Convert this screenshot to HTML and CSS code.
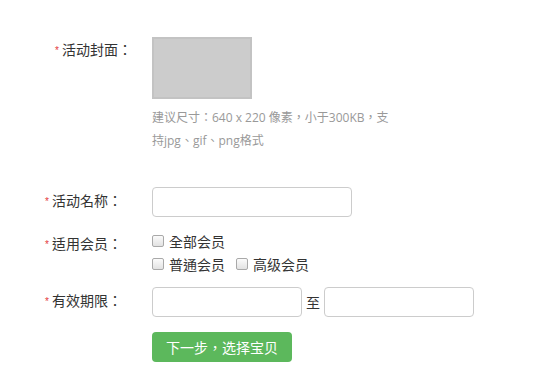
FILE: index.html
```html
<!DOCTYPE html>
<html lang="zh-TW">
<head>
  <meta charset="UTF-8" />
  <title>创建活动</title>
  <link rel="stylesheet" href="styles.css">
</head>
<body>
  <form class="form">
    <div class="row row-cover">
      <label class="label label-cover"><span class="star">*</span>活动封面：</label>
      <div class="field">
        <div class="cover"></div>
        <p class="hint">建议尺寸：640 x 220 像素，小于300KB，支持jpg、gif、png格式</p>
      </div>
    </div>

    <div class="row row-name">
      <label class="label label-input"><span class="star">*</span>活动名称：</label>
      <div class="field">
        <input type="text" class="input input-name" />
      </div>
    </div>

    <div class="row row-member">
      <label class="label label-check"><span class="star">*</span>适用会员：</label>
      <div class="field">
        <div class="check-line">
          <label class="check"><input type="checkbox" class="box" />全部会员</label>
        </div>
        <div class="check-line">
          <label class="check"><input type="checkbox" class="box" />普通会员</label>
          <label class="check"><input type="checkbox" class="box" />高级会员</label>
        </div>
      </div>
    </div>

    <div class="row row-date">
      <label class="label label-input"><span class="star">*</span>有效期限：</label>
      <div class="field date-field">
        <input type="text" class="input input-date" />
        <span class="to">至</span>
        <input type="text" class="input input-date" />
      </div>
    </div>

    <div class="row row-submit">
      <div class="label"></div>
      <div class="field">
        <button type="button" class="btn-next">下一步，选择宝贝</button>
      </div>
    </div>
  </form>
</body>
</html>
```

FILE: styles.css
```css
body {
  margin: 0;
  background: #fff;
  font-family: "Noto Sans CJK TC", "Noto Sans CJK SC", sans-serif;
  color: #333;
}
.form { padding-top: 37px; }
.row {
  display: flex;
  align-items: flex-start;
}
.label {
  width: 122px;
  margin-right: 30px;
  flex-shrink: 0;
  text-align: right;
  font-size: 14px;
  line-height: 24px;
  color: #333;
}
.label-cover { width: 132px; margin-right: 20px; }
.label-input { line-height: 26px; }
.label-check { padding-top: 2px; }
.star {
  color: #e4393c;
  font-family: "Liberation Sans", sans-serif;
  font-size: 10px;
  margin-right: 3px;
  vertical-align: 1px;
}
.cover {
  width: 96px;
  height: 58px;
  background: #cccccc;
  border: 2px solid #c3c3c3;
}
.hint {
  margin: 7px 0 0;
  width: 246px;
  font-family: "Open Sans", "Noto Sans CJK TC", sans-serif;
  font-size: 12px;
  line-height: 23px;
  color: #999;
}
.row-name { margin-top: 35px; }
.input {
  box-sizing: border-box;
  height: 30px;
  border: 1px solid #ccc;
  border-radius: 4px;
  padding: 0 8px;
  font-size: 14px;
  outline: none;
  margin: 0;
}
.input-name { width: 200px; }
.row-member { margin-top: 12px; }
.check-line {
  height: 23px;
  display: flex;
  align-items: center;
}
.check {
  display: flex;
  align-items: center;
  font-size: 14px;
  color: #333;
  margin-right: 11px;
}
.box {
  appearance: none;
  -webkit-appearance: none;
  width: 12px;
  height: 12px;
  margin: 0 5px 0 0;
  border: 1px solid #a9a9a9;
  border-radius: 2px;
  background: linear-gradient(#fbfbfb, #e2e2e2);
  box-sizing: border-box;
}
.row-date { margin-top: 12px; }
.date-field {
  display: flex;
  align-items: center;
}
.input-date { width: 150px; }
.to {
  font-size: 14px;
  margin: 0 4px;
  color: #333;
}
.row-submit { margin-top: 15px; }
.btn-next {
  width: 140px;
  height: 30px;
  border: none;
  border-radius: 4px;
  background: #5cb85c;
  color: #fff;
  font-family: inherit;
  font-size: 14px;
  cursor: pointer;
}
```
